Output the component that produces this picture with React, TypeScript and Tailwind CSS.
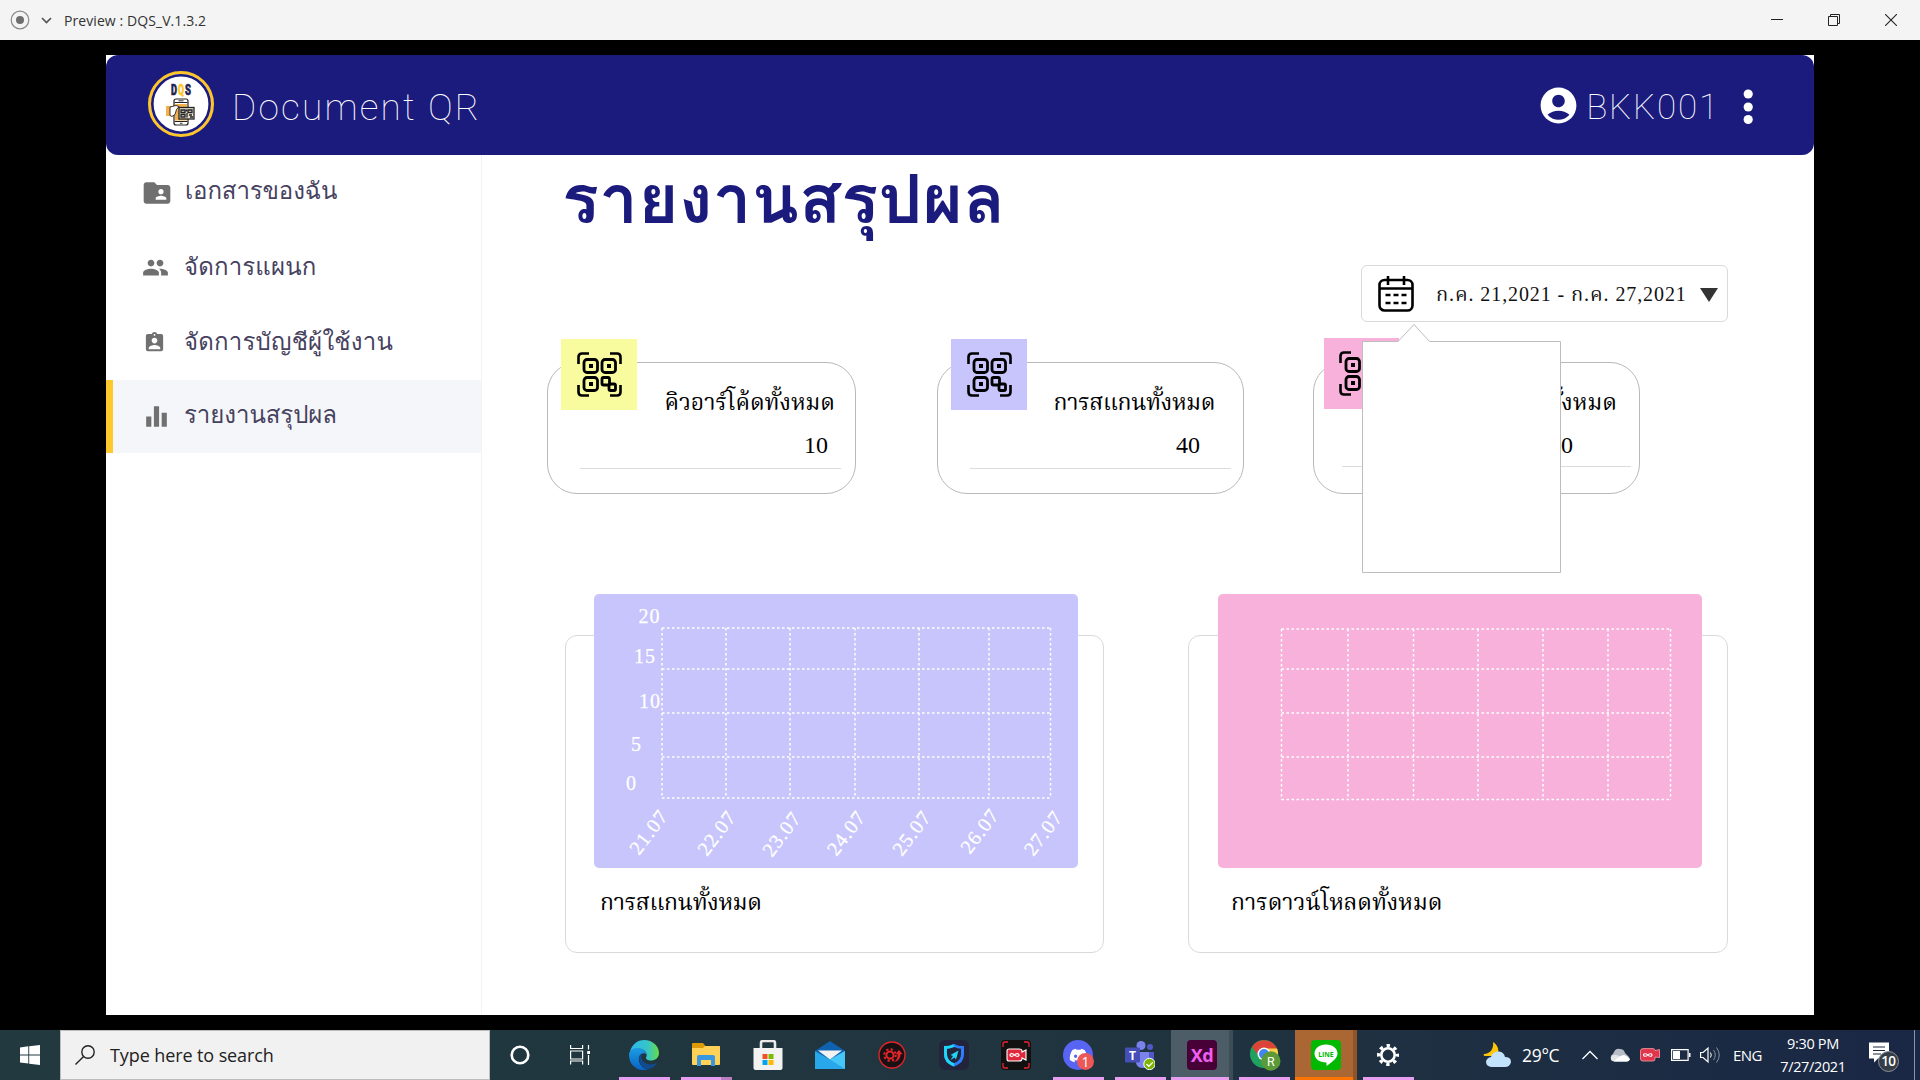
import React from "react";
import { MdFolderShared, MdPeople, MdAssignmentInd, MdEqualizer, MdAccountCircle } from "react-icons/md";
import { FaDiscord } from "react-icons/fa";

function TitleBar() {
  return (
    <header className="flex h-10 items-center bg-[#f4f4f4] font-['Open_Sans',sans-serif] text-[#333]">
      <svg className="ml-[10px] h-5 w-5" viewBox="0 0 20 20">
        <circle cx="10" cy="10" r="8.8" fill="none" stroke="#8a8a8a" strokeWidth="1.2" />
        <circle cx="10" cy="10" r="4" fill="#6e6e6e" />
      </svg>
      <svg className="ml-[11px] h-[10px] w-[11px]" viewBox="0 0 11 10">
        <path d="M1 3l4.5 4.5L10 3" fill="none" stroke="#555" strokeWidth="1.7" />
      </svg>
      <span className="ml-3 text-[14px] tracking-[0.080px] whitespace-nowrap">Preview : DQS_V.1.3.2</span>
      <div className="ml-auto mr-[23px] flex items-center gap-[45px]">
        <svg className="h-3 w-3" viewBox="0 0 12 12"><path d="M0 5.5h12" stroke="#222" /></svg>
        <svg className="h-3 w-3" viewBox="0 0 12 12"><path d="M.5 2.5h9v9h-9zM2.500 2.500v-2h9v9h-2" fill="none" stroke="#222" /></svg>
        <svg className="h-3 w-3" viewBox="0 0 12 12"><path d="M0 0l12 12M12 0L0 12" stroke="#222" strokeWidth="1.100" /></svg>
      </div>
    </header>
  );
}

function Logo() {
  return (
    <svg className="h-[66px] w-[66px]" viewBox="0 0 66 66">
      <circle cx="33" cy="33" r="31.500" fill="#fff" stroke="#ffc629" strokeWidth="3" />
      <circle cx="33" cy="33" r="28.700" fill="none" stroke="#1b1a7d" strokeWidth="2.600" />
      <g fontFamily="Roboto" fontWeight="900" fontSize="15.500" strokeWidth=".6">
        <text x="23" y="24" fill="#1f2451" stroke="#1f2451" textLength="6" lengthAdjust="spacingAndGlyphs">D</text>
        <text x="30" y="24" fill="#ffc629" stroke="#ffc629" textLength="6" lengthAdjust="spacingAndGlyphs">Q</text>
        <text x="37" y="24" fill="#1f2451" stroke="#1f2451" textLength="6" lengthAdjust="spacingAndGlyphs">S</text>
      </g>
      <rect x="18" y="35" width="5" height="10" fill="#f2b04f" />
      <rect x="26" y="28" width="14" height="26" rx="2" fill="#fff" stroke="#222" strokeWidth="1.200" />
      <path d="M26.500 31.500h13M26.500 50.500h13" stroke="#222" />
      <path d="M27 33h12v16.500H27z" fill="#f2b04f" />
      <path d="M30.500 29.800h5M32 52.300h2.500" stroke="#222" strokeWidth=".9" />
      <path d="M22 36l6-1.500 3 1-2.500 3-1.500 5-3 2-2-1z" fill="#fff" stroke="#222" strokeWidth=".9" />
      <rect x="31" y="36.500" width="15" height="11.500" fill="#e9e2d3" stroke="#222" strokeWidth="1.300" />
      <path d="M33 39h4v2.500h-4zM40 39h4v2.500h-4zM33 43.500h4V46h-4zM39 42v4.500M41 44h3M42 46h3M38.500 38.500v2" fill="none" stroke="#222" strokeWidth="1.300" />
    </svg>
  );
}

function AppHeader() {
  return (
    <div className="bg-white">
      <div className="flex h-[100px] items-center rounded-xl bg-[#1b1a7d] pl-[42px] font-['Roboto',sans-serif] font-thin text-white">
        <div className="-mt-0.5"><Logo /></div>
        <span className="ml-[18px] mt-[6px] text-[37px] tracking-[2.200px] whitespace-nowrap">Document QR</span>
        <div className="ml-auto mr-[60px] flex items-center">
          <MdAccountCircle className="h-[43px] w-[43px]" />
          <span className="ml-[6px] mt-[6px] text-[35px] tracking-[1.800px]">BKK001</span>
          <svg className="ml-[23px] mt-1 h-9 w-[11px]" viewBox="0 0 11 36">
            <circle cx="5.200" cy="5" r="4.600" fill="#fff" />
            <circle cx="5.200" cy="18" r="4.600" fill="#fff" />
            <circle cx="5.200" cy="30.500" r="4.600" fill="#fff" />
          </svg>
        </div>
      </div>
    </div>
  );
}

function Sidebar() {
  return (
    <aside className="flex w-[376px] flex-col border-r border-[#f3f3f5] font-['Loma','Noto_Sans_Thai',sans-serif] text-[24px] text-[#46425f]">
      <div className="flex h-[75px] items-center pl-[35px]">
        <MdFolderShared className="h-8 w-8 text-[#707070]" />
        <span className="-mt-[3px] ml-3 tracking-[-0.100px] whitespace-nowrap">เอกสารของฉัน</span>
      </div>
      <div className="flex h-[75px] items-center pl-[36px]">
        <MdPeople className="h-[27px] w-[27px] text-[#707070]" />
        <span className="-mt-px ml-[15px] tracking-[0.150px] whitespace-nowrap">จัดการแผนก</span>
      </div>
      <div className="flex h-[75px] items-center pl-[37px]">
        <MdAssignmentInd className="h-[23px] w-[23px] text-[#707070]" />
        <span className="-mt-[2px] ml-[18px] tracking-[0.200px] whitespace-nowrap">จัดการบัญชีผู้ใช้งาน</span>
      </div>
      <div className="flex h-[73px] items-center border-l-[7px] border-[#ffc92e] bg-[#f5f6f9] pl-[28px]">
        <MdEqualizer className="h-[31px] w-[31px] text-[#707070]" />
        <span className="-mt-[3px] ml-[12px] tracking-[-0.050px] whitespace-nowrap">รายงานสรุปผล</span>
      </div>
    </aside>
  );
}

function QrIcon() {
  return (
    <svg className="h-[45px] w-[45px]" viewBox="0 0 45 45" fill="none" stroke="#000" strokeWidth="2.800">
      <path d="M1.500 12V5q0-3.500 3.500-3.500h7M33 1.500h7q3.500 0 3.500 3.500v7M1.500 33v7q0 3.500 3.500 3.500h7M33 43.500h7q3.500 0 3.500-3.500v-7" strokeWidth="2.600" />
      <rect x="7" y="7.500" width="13.500" height="13" rx="3" />
      <rect x="25" y="7.500" width="13.500" height="13" rx="3" />
      <rect x="7" y="25.500" width="13.500" height="13" rx="3" />
      <rect x="25" y="25.500" width="7.500" height="7.500" rx="1.500" />
      <rect x="32" y="32" width="6.500" height="6.500" rx="1.500" />
      <path d="M12 14h4M30 14h4M12 32h4" strokeWidth="4" />
    </svg>
  );
}

function StatCard(p: { card: string; badge: string; label: string; labelBox: string; value: string; valueBox: string; rule: string }) {
  return (
    <section className={"relative h-[132px] rounded-[30px] border border-[#b9b9b9] bg-white text-black " + p.card}>
      <div className={"absolute flex h-[71px] items-center justify-center " + p.badge}>
        <QrIcon />
      </div>
      <div className={"mt-[18px] h-[43px] text-right text-[23px] leading-[44px] whitespace-nowrap " + p.labelBox}>{p.label}</div>
      <div className={"h-[44px] text-right text-[24px] leading-[42px] " + p.valueBox}>{p.value}</div>
      <div className={"h-[1px] bg-[#dcdcdc] " + p.rule} />
    </section>
  );
}

function Grid(p: { xs: number[]; ys: number[] }) {
  const { xs, ys } = p;
  return (
    <g stroke="#fff" strokeWidth="1.500" strokeDasharray="2.500 2.500">
      {xs.map((x) => <path key={"x" + x} d={`M${x} ${ys[0]}V${ys[4]}`} />)}
      {ys.map((y) => <path key={"y" + y} d={`M${xs[0]} ${y}H${xs[6]}`} />)}
    </g>
  );
}

const yTicks = [
  { t: "20", x: 44.500, y: 29 }, { t: "15", x: 40, y: 69 }, { t: "10", x: 45, y: 114 },
  { t: "5", x: 37, y: 157 }, { t: "0", x: 32, y: 196 },
];
const xTicks = [
  { t: "21.07", x: 45, y: 262 }, { t: "22.07", x: 113, y: 263 }, { t: "23.07", x: 178, y: 264 },
  { t: "24.07", x: 242.500, y: 263 }, { t: "25.07", x: 308, y: 263 }, { t: "26.07", x: 376, y: 261 }, { t: "27.07", x: 439.500, y: 263 },
];

function Charts() {
  return (
    <div className="mt-[141px] flex">
      <section className="ml-[83px] h-[318px] w-[539px] rounded-xl border border-[#dadada] bg-white">
        <svg className="-mt-[42px] ml-[28px] h-[274px] w-[484px] rounded-[5px] bg-[#c7c5fb]" viewBox="0 0 484 274">
          <Grid xs={[68, 132, 196, 261, 325, 395, 456.500]} ys={[34, 75, 119, 163, 204]} />
          <g fill="#fff" stroke="#fff" strokeWidth=".25" fontFamily="Liberation Serif" fontSize="20" letterSpacing="1">
            {yTicks.map((k) => <text key={k.t} x={k.x} y={k.y}>{k.t}</text>)}
            {xTicks.map((k) => <text key={k.t} transform={`translate(${k.x} ${k.y}) rotate(-53)`}>{k.t}</text>)}
          </g>
        </svg>
        <div className="ml-[34px] mt-[11px] text-[23px] leading-[48px] tracking-[-0.350px] whitespace-nowrap">การสแกนทั้งหมด</div>
      </section>
      <section className="ml-[84px] h-[318px] w-[540px] rounded-xl border border-[#dadada] bg-white">
        <svg className="-mt-[42px] ml-[29px] h-[274px] w-[484px] rounded-[5px] bg-[#f7b1da]" viewBox="0 0 484 274">
          <Grid xs={[63.500, 130, 195.500, 260, 325, 390, 452.500]} ys={[35, 75, 119, 163, 205.500]} />
        </svg>
        <div className="ml-[42px] mt-[11px] text-[23px] leading-[48px] tracking-[-0.050px] whitespace-nowrap">การดาวน์โหลดทั้งหมด</div>
      </section>
    </div>
  );
}

function DatePicker() {
  return (
    <div className="relative mr-[86px] flex h-[57px] w-[367px] items-center self-end rounded-md border-[1.500px] border-[#d9d9d9] bg-white">
      <svg className="ml-4 h-[36px] w-[36px]" viewBox="0 0 36 36" fill="none" stroke="#000" strokeWidth="2.600">
        <rect x="1.500" y="4" width="33" height="30.500" rx="5" />
        <path d="M1.500 12.500h33M10 0v9M26 0v9" />
        <path d="M7.500 19h5M15.500 19h5M23.500 19h5M7.500 27h5M15.500 27h5M23.500 27h5" strokeWidth="2.400" />
      </svg>
      <span className="ml-[22px] w-[249px] text-[20px] tracking-[0.900px] whitespace-nowrap text-[#111]">ก.ค. 21,2021 - ก.ค. 27,2021</span>
      <svg className="ml-[15px] mt-0.5 h-[14px] w-[18px] shrink-0" viewBox="0 0 18 14"><path d="M0 0h18L9 14z" fill="#333" /></svg>
      <svg className="absolute left-0 top-[57px] z-10 h-[252px] w-[202px]" viewBox="0 0 202 252">
        <path d="M.5 18.500H36L52 1.500L67.500 18.500H198.500V249.500H.5z" fill="#fff" stroke="#bdbdbd" />
      </svg>
    </div>
  );
}

function Main() {
  return (
    <main className="flex flex-1 flex-col font-['Liberation_Serif','Noto_Serif_Thai',serif] text-black">
      <h1 className="ml-[80px] h-[110px] font-['Loma','Noto_Sans_Thai',sans-serif] text-[69px] leading-[88px] font-bold tracking-[0.200px] whitespace-nowrap text-[#1b1a7d]">รายงานสรุปผล</h1>
      <DatePicker />
      <div className="mt-[40px] flex">
        <StatCard card="ml-[65px] w-[309px]" badge="-top-[24px] left-[13px] w-[76px] bg-[#f9fb9f]" label="คิวอาร์โค้ดทั้งหมด" labelBox="pr-[20px] tracking-[-0.050px]" value="10" valueBox="pr-[27px]" rule="ml-8 mr-[14px]" />
        <StatCard card="ml-[81px] w-[307px]" badge="-top-[24px] left-[13px] w-[76px] bg-[#c7c5fb]" label="การสแกนทั้งหมด" labelBox="pr-[28px] tracking-[-0.350px]" value="40" valueBox="pr-[43px]" rule="ml-8 mr-3" />
        <StatCard card="ml-[69px] w-[327px]" badge="-top-[25px] left-[10px] w-[75px] bg-[#f7b1da]" label="การดาวน์โหลดทั้งหมด" labelBox="pr-[22px]" value="10" valueBox="pr-[66px]" rule="-mt-[2px] ml-7 mr-2" />
      </div>
      <Charts />
    </main>
  );
}

function Slot(p: { cls?: string; line?: string; children: React.ReactNode }) {
  return (
    <div className={"flex h-[50px] w-[62px] shrink-0 flex-col items-center " + (p.cls ?? "")}>
      <div className="flex h-[47px] items-center justify-center pt-[3px]">{p.children}</div>
      <div className={"h-[3px] " + (p.line ?? "")} />
    </div>
  );
}

function Taskbar() {
  return (
    <footer className="flex h-[50px] bg-linear-to-r from-[#21393f] via-[#20343f] via-60% to-[#1a2745] font-['Open_Sans',sans-serif] text-white">
      <div className="flex w-[60px] items-center justify-center">
        <svg className="h-5 w-5" viewBox="0 0 20 20" fill="#fff"><path d="M0 2.500L8.300 1.300v8.200H0zM9.200 1.200L20 0v9.500H9.200zM0 10.400h8.300v8.200L0 17.500zM9.200 10.400H20V20L9.200 18.700z" /></svg>
      </div>
      <div className="flex w-[430px] items-center border border-[#bdbdbd] bg-[#f1f1f1] text-[#222]">
        <svg className="ml-[14px] h-5 w-5" viewBox="0 0 20 20" fill="none" stroke="#222" strokeWidth="1.400"><circle cx="13" cy="7" r="6.200" /><path d="M8.600 11.400L.5 19.500" /></svg>
        <span className="ml-[15px] text-[18px] tracking-[-0.100px] whitespace-nowrap">Type here to search</span>
      </div>
      <div className="flex w-[60px] items-center justify-center">
        <svg className="h-5 w-5" viewBox="0 0 20 20"><circle cx="10" cy="10" r="8.300" fill="none" stroke="#fff" strokeWidth="2.600" /></svg>
      </div>
      <div className="flex w-[63px] items-center justify-center pr-[3px]">
        <svg className="h-5 w-5" viewBox="0 0 20 20" fill="none" stroke="#fff" strokeWidth="1.200"><path d="M.6 0v3.500h12V0M.6 6h12v8h-12zM.6 19.500V16h12v3.500M18.500 0v4.500M18.500 10v10" /><path d="M17.200 6h2.800v3h-2.800z" fill="#fff" stroke="none" /></svg>
      </div>
      <Slot line="w-[51px] bg-[#e79df0]">
        <svg className="h-[30px] w-[30px]" viewBox="0 0 30 30">
          <defs>
            <linearGradient id="eg" x1="0" x2="1"><stop offset="0" stopColor="#2fb8ef" /><stop offset=".6" stopColor="#35c4c9" /><stop offset="1" stopColor="#66dd44" /></linearGradient>
            <linearGradient id="eb" y1="0" y2="1" x1="0" x2="0"><stop offset="0" stopColor="#1b9de2" /><stop offset="1" stopColor="#0b62c4" /></linearGradient>
          </defs>
          <path d="M1 12C2.500 4.500 8.500 0 15 0c9 0 15 6.500 15 13 0 5-4 7.500-8 7.500-3.500 0-5.500-1.500-5-3 1.500-1.500 1-6.500-4-8.500C8 8 3 9 1 12z" fill="url(#eg)" />
          <path d="M0 15C0 9.500 5 7.500 9.500 8c5 .5 7.500 4 8 6.500-2-2-5.500-1.500-7 1.500C8 21 12 28 18 29.700 8 32 0 24.500 0 15z" fill="url(#eb)" />
          <path d="M10.500 16c-2 6 3 12.500 7.500 13.700 4-.7 8-3.200 10-6.700-7 3-13 1-15.500-4.500-.5-1.500 0-3 .5-4-1 0-2 .5-2.500 1.500z" fill="#114a8f" />
        </svg>
      </Slot>
      <Slot line="w-[51px] border-r-[11px] border-[#b97dc0] bg-[#e79df0]">
        <svg className="h-6 w-7" viewBox="0 0 28 24"><path d="M0 1q0-1 1-1h10l2.500 3H27q1 0 1 1v5H0z" fill="#dd9a05" /><path d="M0 5h11l2-2h14q1 0 1 1v17q0 1-1 1H1q-1 0-1-1z" fill="#ffd257" /><path d="M5 23v-9q0-2 2-2h14q2 0 2 2v9h-4v-6H9v6z" fill="#3897e0" /></svg>
      </Slot>
      <Slot>
        <svg className="h-[30px] w-[30px]" viewBox="0 0 30 30"><path d="M8 9V3q0-2 2-2h10q2 0 2 2v6" fill="none" stroke="#e9e9e9" strokeWidth="2.600" /><path d="M.5 8h29v20q0 2-2 2h-25q-2 0-2-2z" fill="#f2f2f2" /><path d="M9.500 14h5v5h-5z" fill="#f25022" /><path d="M15.500 14h5v5h-5z" fill="#7fba00" /><path d="M9.500 20h5v5h-5z" fill="#00a4ef" /><path d="M15.500 20h5v5h-5z" fill="#ffb900" /></svg>
      </Slot>
      <Slot>
        <svg className="h-[30px] w-[30px]" viewBox="0 0 30 30"><path d="M0 11L15 1l15 10-15 9z" fill="#0f62b0" /><path d="M0 11l15 8.500L30 11v18H0z" fill="#28a8ea" /><path d="M3 10.500h24l-12 9z" fill="#f3f3f3" /><path d="M30 11v18L15 19.500z" fill="#45c8f8" /></svg>
      </Slot>
      <Slot>
        <svg className="h-7 w-7" viewBox="0 0 28 28"><circle cx="14" cy="14" r="13" fill="#181113" stroke="#e5252a" strokeWidth="1.300" /><circle cx="12" cy="14" r="3.600" fill="none" stroke="#e5252a" strokeWidth="2" /><circle cx="12" cy="14" r="5.800" fill="none" stroke="#e5252a" strokeWidth="2" strokeDasharray="2.300 2.250" /><path d="M13 21c4.500 0 6.500-3 6.500-7.500H17l4-5 4 5h-2.300c0 5-3.700 8.500-9.700 7.500z" fill="#e5252a" stroke="#181113" strokeWidth=".5" /></svg>
      </Slot>
      <Slot>
        <svg className="h-[30px] w-[30px]" viewBox="0 0 30 30"><rect width="30" height="30" rx="6" fill="#22243b" /><path d="M15 5.500c3 1.500 6 2 8.500 2v7c0 5-3.500 8.500-8.500 10.500-5-2-8.500-5.500-8.500-10.500v-7c2.500 0 5.500-.5 8.500-2z" fill="none" stroke="#2d7dff" strokeWidth="3" /><path d="M15 25c-5-2-8.500-5.500-8.500-10.500v-7c2.500 0 5.500-.5 8.500-2" fill="none" stroke="#1fd6f5" strokeWidth="3" /><path d="M19.500 10.500l-8 4.500 2.500 1-2.500 4 4-2.500 1.500 2z" fill="#1fd6f5" /></svg>
      </Slot>
      <Slot>
        <svg className="h-[30px] w-[30px]" viewBox="0 0 30 30"><rect width="30" height="30" rx="4" fill="#111" /><path d="M2 7V4q0-2 2-2h3M23 2h3q2 0 2 2v3M2 23v3q0 2 2 2h3M23 28h3q2 0 2-2v-3" fill="none" stroke="#e23" strokeWidth="1.300" /><path d="M8 9h10q3 0 3 2v1l4-2v10l-4-2v1q0 2-3 2H8q-2 0-2-2v-8q0-2 2-2z" fill="#e0283c" stroke="#fff" strokeWidth="1.100" /><path d="M13.500 15c-1.200-1.500-4.500-2-4.500 0s3.300 1.500 4.500 0 4.500-2 4.500 0-3.300 1.500-4.500 0z" fill="none" stroke="#fff" strokeWidth="1.200" /></svg>
      </Slot>
      <Slot line="w-[51px] bg-[#e79df0]">
        <div className="relative flex h-[30px] w-[30px] items-center justify-center rounded-full bg-[#5865f2]">
          <FaDiscord className="h-[19px] w-[19px] text-white" />
          <span className="absolute left-[14px] top-[13px] flex h-[17px] w-[17px] items-center justify-center rounded-full bg-[#ed5757] text-[14px] leading-none">1</span>
        </div>
      </Slot>
      <Slot line="w-[51px] bg-[#e79df0]">
        <svg className="h-[30px] w-[30px]" viewBox="0 0 30 30"><circle cx="16" cy="5.500" r="4.500" fill="#7b83eb" /><circle cx="25" cy="7" r="3" fill="#5059c9" /><path d="M20 12h9v9q0 4-5 4h-4z" fill="#5059c9" /><path d="M11 12h13v11q0 5-6 5t-7-5z" fill="#7b83eb" /><rect y="7.500" width="15" height="15" rx="1" fill="#464eb8" /><text x="4" y="19.500" fill="#fff" fontFamily="Open Sans" fontWeight="bold" fontSize="12">T</text><circle cx="24.500" cy="24" r="5.700" fill="#7bb500" stroke="#fff" strokeWidth="1" /><path d="M21.500 24l2.300 2.300 4-4" fill="none" stroke="#fff" strokeWidth="1.300" /></svg>
      </Slot>
      <Slot cls="border-r-4 border-[#3c4d57] bg-[#4c5d68]" line="w-full bg-[#e79df0]">
        <div className="ml-1 flex h-[30px] w-[30px] items-center justify-center rounded-[4px] bg-[#470137] font-['Noto_Sans',sans-serif] text-[18px] font-bold leading-none tracking-[-0.500px] text-[#ee5ff0]">Xd</div>
      </Slot>
      <Slot line="w-[51px] bg-[#e79df0]">
        <svg className="ml-0.5 h-[32px] w-[32px]" viewBox="0 0 32 32"><circle cx="15" cy="15" r="14" fill="#1fa15f" /><path d="M3 8a14 14 0 0 1 25 2H15l-5 7z" fill="#dc4437" /><path d="M28 9.500H15l6 8-5 11.500A14 14 0 0 0 28 9.500z" fill="#ffcd46" /><circle cx="15" cy="15" r="6.500" fill="#fff" /><circle cx="15" cy="15" r="5" fill="#4285f4" /><circle cx="21.800" cy="22" r="9.700" fill="#5c9a38" /><text x="18" y="26.800" fill="#fff" fontFamily="Roboto" fontSize="12.500">R</text></svg>
      </Slot>
      <Slot cls="border-r-4 border-[#8f5529] bg-[#aa6633]" line="w-full bg-[#ff7400]">
        <svg className="ml-[3px] h-[30px] w-[30px]" viewBox="0 0 30 30"><rect width="30" height="30" rx="4" fill="#00b900" /><path d="M15 4.500c7 0 11.500 4 11.500 9 0 4-4 7.500-11 12.500v-3.500C8 22.500 3.500 18.500 3.500 13.500c0-5 4.500-9 11.500-9z" fill="#fff" /><text x="7.200" y="16.500" fill="#00b900" fontFamily="Open Sans" fontWeight="bold" fontSize="7.200" textLength="15.500" lengthAdjust="spacingAndGlyphs">LINE</text></svg>
      </Slot>
      <Slot line="w-[51px] bg-[#e79df0]">
        <svg className="h-[22px] w-[22px]" viewBox="0 0 22 22"><circle cx="11" cy="11" r="6.700" fill="none" stroke="#fff" strokeWidth="2.600" /><circle cx="11" cy="11" r="9.400" fill="none" stroke="#fff" strokeWidth="3.200" strokeDasharray="3.400 3.983" strokeDashoffset="1.700" /></svg>
      </Slot>
      <div className="ml-auto flex items-center">
        <svg className="h-[26px] w-7" viewBox="0 0 28 26"><path d="M10 0c5 3 7 9 4 14H2c-1 0-2-1-1-2C7 12 11 7 10 0z" fill="#ffc60a" /><path d="M8 25q-5-1-5-5.500 1-4 5-4.500 2-6 8-5.500 5 .5 6 5.500 6 0 6 5-1 5-6 5z" fill="#c3e2fb" /></svg>
        <span className="ml-[11px] w-[40px] text-[17.500px] tracking-[-0.300px] whitespace-nowrap">29°C</span>
        <svg className="ml-[20px] h-[10px] w-4" viewBox="0 0 16 10"><path d="M.5 9L8 1.500 15.500 9" fill="none" stroke="#fff" strokeWidth="1.300" /></svg>
        <svg className="ml-3 h-[14px] w-5" viewBox="0 0 20 14"><path d="M2 12Q-1 8 3 6q2-6 7-5 4 0 5 4l4 4z" fill="#b8bcc4" /><path d="M1 9q2-3 5-2 6 1 12 6.500H4Q0 13 1 9z" fill="#e3e5e8" /><path d="M4 13.500q2-3 6-5 4-3 7 0 3 1 3 3-1 2-3 2z" fill="#fff" /></svg>
        <svg className="ml-[10px] h-[14px] w-5" viewBox="0 0 20 14"><path d="M3 .6h10q2 0 2 2l4.500-1v8L15 9v2q0 2-2 2H3q-2.500 0-2.500-2V3Q.5.6 3 .6z" fill="#e0354a" stroke="#f8a0a8" strokeWidth=".8" /><path d="M7.800 7c-1-1.500-4.300-2-4.300 0s3.300 1.500 4.300 0 4.200-2 4.200 0-3.200 1.500-4.200 0z" fill="none" stroke="#fff" strokeWidth="1.100" /></svg>
        <svg className="ml-[11px] h-[12px] w-5" viewBox="0 0 20 12"><path d="M.6.6h16.500v10.800H.6z" fill="none" stroke="#fff" strokeWidth="1.200" /><path d="M2 2h7v8H2zM18 4h1.500v4H18z" fill="#fff" /></svg>
        <svg className="ml-[9px] h-[18px] w-[21px]" viewBox="0 0 21 18" fill="none" stroke="#fff"><path d="M.6 6.500h2.500L8 2v14l-4.900-4.500H.6z" strokeWidth="1.200" /><path d="M10.500 6.500q1.500 2.500 0 5" /><path d="M13.500 4q3.500 5 0 10M16.500 1.500q5.500 7.500 0 15" stroke="#8790a0" /></svg>
        <span className="ml-[12px] w-[30px] text-[15px] tracking-[-0.600px]">ENG</span>
        <div className="ml-[15px] w-[70px] text-center text-[14.500px] leading-[23px] tracking-[-0.350px] whitespace-nowrap">
          <div>9:30 PM</div>
          <div>7/27/2021</div>
        </div>
        <svg className="ml-[21px] h-[34px] w-[32px]" viewBox="0 0 32 34"><path d="M0 4.500h20v16H9l-4 4v-4H0z" fill="#fff" /><path d="M4 9h12M4 12.500h12M4 16h8" stroke="#1b2940" strokeWidth="1.200" /><circle cx="19.500" cy="23.500" r="10" fill="#353d47" stroke="#8b929c" /><text x="12.200" y="28.300" fill="#fff" fontFamily="Open Sans" fontSize="13.500" fontWeight="600" letterSpacing="-.6">10</text></svg>
        <div className="ml-[13px] mr-[5px] h-[50px] w-px bg-[#8a93a3]" />
      </div>
    </footer>
  );
}

export default function App() {
  return (
    <div className="flex h-[1080px] w-[1920px] flex-col overflow-hidden bg-black">
      <TitleBar />
      <div className="mx-[106px] mb-[15px] mt-[15px] flex h-[960px] flex-col bg-white">
        <AppHeader />
        <div className="flex flex-1">
          <Sidebar />
          <Main />
        </div>
      </div>
      <Taskbar />
    </div>
  );
}
